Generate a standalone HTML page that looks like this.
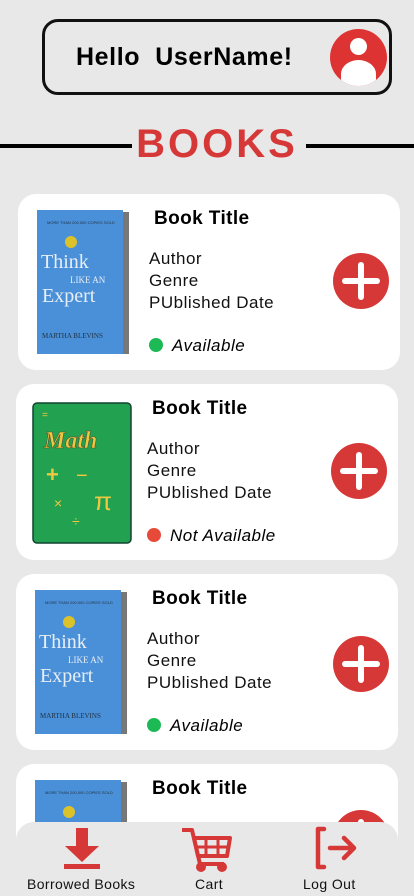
<!DOCTYPE html>
<html><head><style>
*{margin:0;padding:0;box-sizing:border-box}
html,body{width:414px;height:896px;overflow:hidden}
body{background:#e8e8e8;font-family:"Liberation Sans",sans-serif;position:relative}
.hdr{position:absolute;left:42px;top:19px;width:350px;height:76px;border:3px solid #111;border-radius:16px}
.hdr span{position:absolute;left:31px;top:21px;font-size:25px;font-weight:bold;color:#000;letter-spacing:0.6px}
.av{position:absolute;left:285px;top:7px;width:57px;height:57px;border-radius:50%;background:#d33;overflow:hidden}
.line{position:absolute;top:144px;height:4px;background:#000}
.ttl{position:absolute;left:0;width:434px;top:122px;text-align:center;font-size:40px;font-weight:bold;color:#d63838;letter-spacing:3px}
.card{position:absolute;width:382px;height:176px;background:#fff;border-radius:18px}
.card .t{position:absolute;left:136px;top:14px;font-size:19px;font-weight:bold;letter-spacing:0.4px}
.card .i{position:absolute;left:131px;top:54px;font-size:17px;line-height:22px;color:#111;letter-spacing:0.5px}
.card .s{position:absolute;left:131px;top:142px;font-size:17px;font-style:italic;letter-spacing:0.5px}
.card .s b{display:inline-block;width:14px;height:14px;border-radius:50%;vertical-align:-1px;margin-right:9px}
.plus{position:absolute;left:315px;top:59px;width:56px;height:56px;border-radius:50%;background:#d63838}
.plus:before{content:"";position:absolute;left:9px;top:25px;width:38px;height:6px;background:#fff;border-radius:3px}
.plus:after{content:"";position:absolute;left:25px;top:9px;width:6px;height:38px;background:#fff;border-radius:3px}
.cov{position:absolute;left:19px;top:16px}
.nav{position:absolute;left:16px;top:822px;width:382px;height:80px;background:#e8e8e8;border-radius:18px 18px 0 0}
.nl{position:absolute;top:876px;font-size:14px;color:#111;letter-spacing:0.4px}
</style></head><body>
<div class="hdr"><span>Hello&nbsp; UserName!</span>
<div class="av"><div style="position:absolute;left:20px;top:9px;width:17px;height:17px;border-radius:50%;background:#fff"></div><div style="position:absolute;left:11px;top:31px;width:35px;height:28px;border-radius:50% 50% 0 0;background:#fff"></div></div></div>
<div class="line" style="left:0;width:132px"></div><div class="line" style="left:306px;width:108px"></div>
<div class="ttl">BOOKS</div>

<svg width="0" height="0" style="position:absolute"><defs>
<g id="blue"><rect x="84" y="2" width="8" height="142" fill="#777"/><rect x="0" y="0" width="86" height="144" fill="#4a90d9"/>
<text x="10" y="14" font-size="4" fill="#234">MORE THAN 200,000 COPIES SOLD</text>
<circle cx="34" cy="32" r="6" fill="#dcc22a"/>
<text x="4" y="58" font-family="Liberation Serif" font-size="20" fill="#e8eef5">Think</text>
<text x="33" y="73" font-family="Liberation Serif" font-size="9" fill="#e8eef5">LIKE AN</text>
<text x="5" y="92" font-family="Liberation Serif" font-size="20" fill="#e8eef5">Expert</text>
<text x="5" y="128" font-family="Liberation Serif" font-size="7" fill="#234">MARTHA BLEVINS</text></g>
</defs></svg>

<div class="card" style="left:18px;top:194px">
<svg class="cov" width="94" height="146"><use href="#blue"/></svg>
<div class="t">Book Title</div><div class="i">Author<br>Genre<br>PUblished Date</div>
<div class="s"><b style="background:#1db954"></b>Available</div><div class="plus" style="left:315px;top:59px"></div></div>

<div class="card" style="left:16px;top:384px">
<svg style="position:absolute;left:16px;top:18px" width="100" height="142"><rect x="1" y="1" width="98" height="140" rx="4" fill="#22a150" stroke="#143" stroke-width="1.5"/>
<text x="12" y="46" font-family="Liberation Serif" font-size="24" font-style="italic" font-weight="bold" fill="#f0c840" stroke="#553" stroke-width=".6">Math</text>
<text x="10" y="16" font-size="10" fill="#f0c840">=</text>
<text x="14" y="80" font-size="22" font-weight="bold" fill="#f0c840">+</text><text x="44" y="80" font-size="20" fill="#f0c840">−</text>
<text x="62" y="108" font-size="26" fill="#f0c840">π</text><text x="22" y="106" font-size="14" fill="#f0c840">×</text><text x="40" y="124" font-size="14" fill="#f0c840">÷</text></svg>
<div class="t">Book Title</div><div class="i">Author<br>Genre<br>PUblished Date</div>
<div class="s"><b style="background:#e84a3a"></b>Not Available</div><div class="plus"></div></div>

<div class="card" style="left:16px;top:574px">
<svg class="cov" width="94" height="146"><use href="#blue"/></svg>
<div class="t">Book Title</div><div class="i">Author<br>Genre<br>PUblished Date</div>
<div class="s"><b style="background:#1db954"></b>Available</div><div class="plus" style="left:317px;top:62px"></div></div>

<div class="card" style="left:16px;top:764px">
<svg class="cov" width="94" height="146"><use href="#blue"/></svg>
<div class="t">Book Title</div><div class="plus" style="left:317px;top:46px"></div></div>

<div class="nav"></div>
<svg style="position:absolute;left:62px;top:826px" width="42" height="44"><path d="M14 2h12v18h11L20 36 3 20h11z" fill="#d63838"/><rect x="2" y="38" width="36" height="5" fill="#d63838"/></svg>
<svg style="position:absolute;left:180px;top:826px" width="54" height="46" fill="none" stroke="#d63838" stroke-width="4" stroke-linejoin="round"><path d="M2 4h10l8 34h24"/><path d="M14 12h36l-3 18H18z"/><path d="M26 12v18M38 12v18M16 21h34" stroke-width="3"/><circle cx="21" cy="41" r="3" fill="#d63838"/><circle cx="42" cy="41" r="3" fill="#d63838"/></svg>
<svg style="position:absolute;left:312px;top:826px" width="48" height="46" fill="none" stroke="#d63838" stroke-width="4.5" stroke-linecap="round" stroke-linejoin="round"><path d="M12 3H6v38h6"/><path d="M18 22h24M32 12l10 10-10 10"/></svg>
<div class="nl" style="left:27px">Borrowed Books</div>
<div class="nl" style="left:195px">Cart</div>
<div class="nl" style="left:303px">Log Out</div>
</body></html>
